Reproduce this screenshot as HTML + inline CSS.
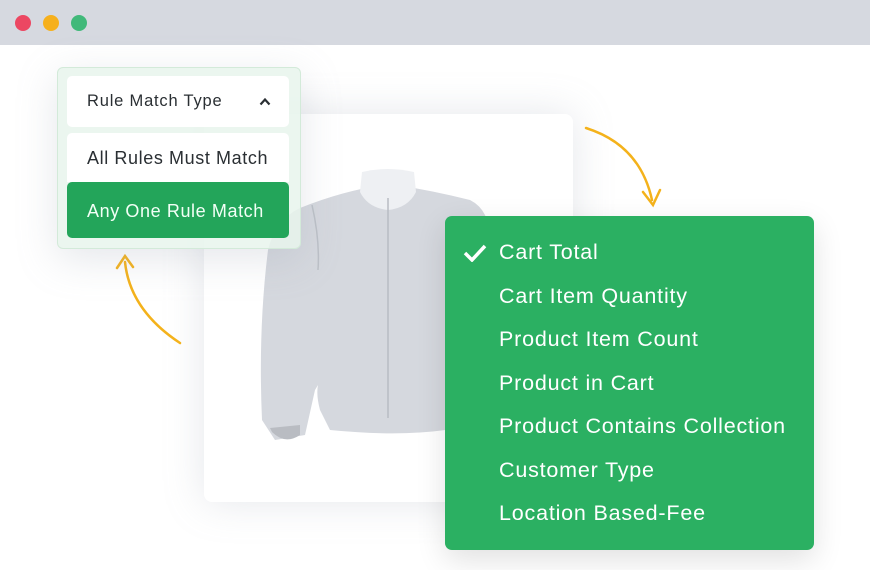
<!DOCTYPE html>
<html><head><style>
*{margin:0;padding:0;box-sizing:border-box}
body{width:870px;height:570px;background:#fff;position:relative;overflow:hidden;font-family:"Liberation Sans",sans-serif}
.top{position:absolute;left:0;top:0;width:870px;height:45px;background:#d6d9e0}
.dot{position:absolute;top:15px;width:16px;height:16px;border-radius:50%}
.card{position:absolute;left:204px;top:114px;width:369px;height:388px;background:#fff;border-radius:8px;box-shadow:0 0 40px rgba(150,160,175,.25)}
.panel{position:absolute;left:57px;top:67px;width:244px;height:182px;background:rgba(232,244,236,.85);border:1.5px solid #d3ead9;border-radius:6px;box-shadow:0 10px 40px rgba(150,160,175,.25)}
.it{position:absolute;left:67px;width:222px;background:#fff;border-radius:5px;color:#2a2f33;padding-left:20px;letter-spacing:0.6px}
.list{position:absolute;left:445px;top:216px;width:369px;height:334px;background:#2bb062;border-radius:7px;color:#fff;font-size:21.5px;letter-spacing:0.8px;box-shadow:0 10px 30px rgba(0,0,0,.12)}
.list div{position:absolute;left:54px;white-space:nowrap}
</style></head><body>
<div class="top"></div>
<div class="dot" style="left:15px;background:#ec4762"></div>
<div class="dot" style="left:43px;background:#f6b01c"></div>
<div class="dot" style="left:71px;background:#41b97a"></div>
<div class="card"></div>
<svg style="position:absolute;left:0;top:0" width="870" height="570">
<path d="M300 208 Q345 190 385 185 L395 185 Q430 190 470 200 Q490 210 490 240 L490 420 Q430 440 330 430 L320 410 Q316 395 318 385 L315 390 L305 435 L275 440 L262 420 Q258 330 268 250 Q275 220 300 208Z" fill="#d5d8de"/>
<path d="M272 432 Q285 445 300 435 L300 425 L270 428Z" fill="#b9bcc2"/>
<path d="M362 172 Q388 166 414 172 L416 192 Q408 208 388 210 Q368 208 360 192Z" fill="#eef0f3"/>
<path d="M388 198 L388 418" stroke="#b8bcc3" stroke-width="1.5"/>
<path d="M312 205 Q320 240 318 270" stroke="#bcc0c7" stroke-width="1.5" fill="none"/>
<path d="M586 128 Q640 145 652 200" stroke="#f4b21b" stroke-width="2.5" fill="none" stroke-linecap="round"/>
<path d="M643 192 L653 205 L660 190" stroke="#f4b21b" stroke-width="2.5" fill="none" stroke-linecap="round"/>
<path d="M180 343 Q130 310 125 262" stroke="#f4b21b" stroke-width="2.5" fill="none" stroke-linecap="round"/>
<path d="M117 268 L125 256 L133 267" stroke="#f4b21b" stroke-width="2.5" fill="none" stroke-linecap="round"/>
</svg>
<div class="panel"></div>
<div class="it" style="top:76px;height:51px;line-height:51px;font-size:16.5px;letter-spacing:0.8px">Rule Match Type
<svg style="position:absolute;right:18px;top:21px" width="12" height="9"><path d="M1.5 7.5 L6 2.5 L10.5 7.5" stroke="#2a2f33" stroke-width="2.2" fill="none"/></svg></div>
<div class="it" style="top:133px;height:49px;line-height:50px;font-size:18px;border-radius:5px 5px 0 0">All Rules Must Match</div>
<div class="it" style="top:182px;height:56px;line-height:58px;font-size:18px;background:#23a55a;color:#f2fff6">Any One Rule Match</div>
<div class="list">
<svg style="position:absolute;left:18px;top:28px" width="24" height="18"><path d="M2 9 L9 16 L22 2" stroke="#fff" stroke-width="3.5" fill="none"/></svg>
<div style="top:24px">Cart Total</div>
<div style="top:68px">Cart Item Quantity</div>
<div style="top:111px">Product Item Count</div>
<div style="top:155px">Product in Cart</div>
<div style="top:198px">Product Contains Collection</div>
<div style="top:242px">Customer Type</div>
<div style="top:285px">Location Based-Fee</div>
</div>
</body></html>
